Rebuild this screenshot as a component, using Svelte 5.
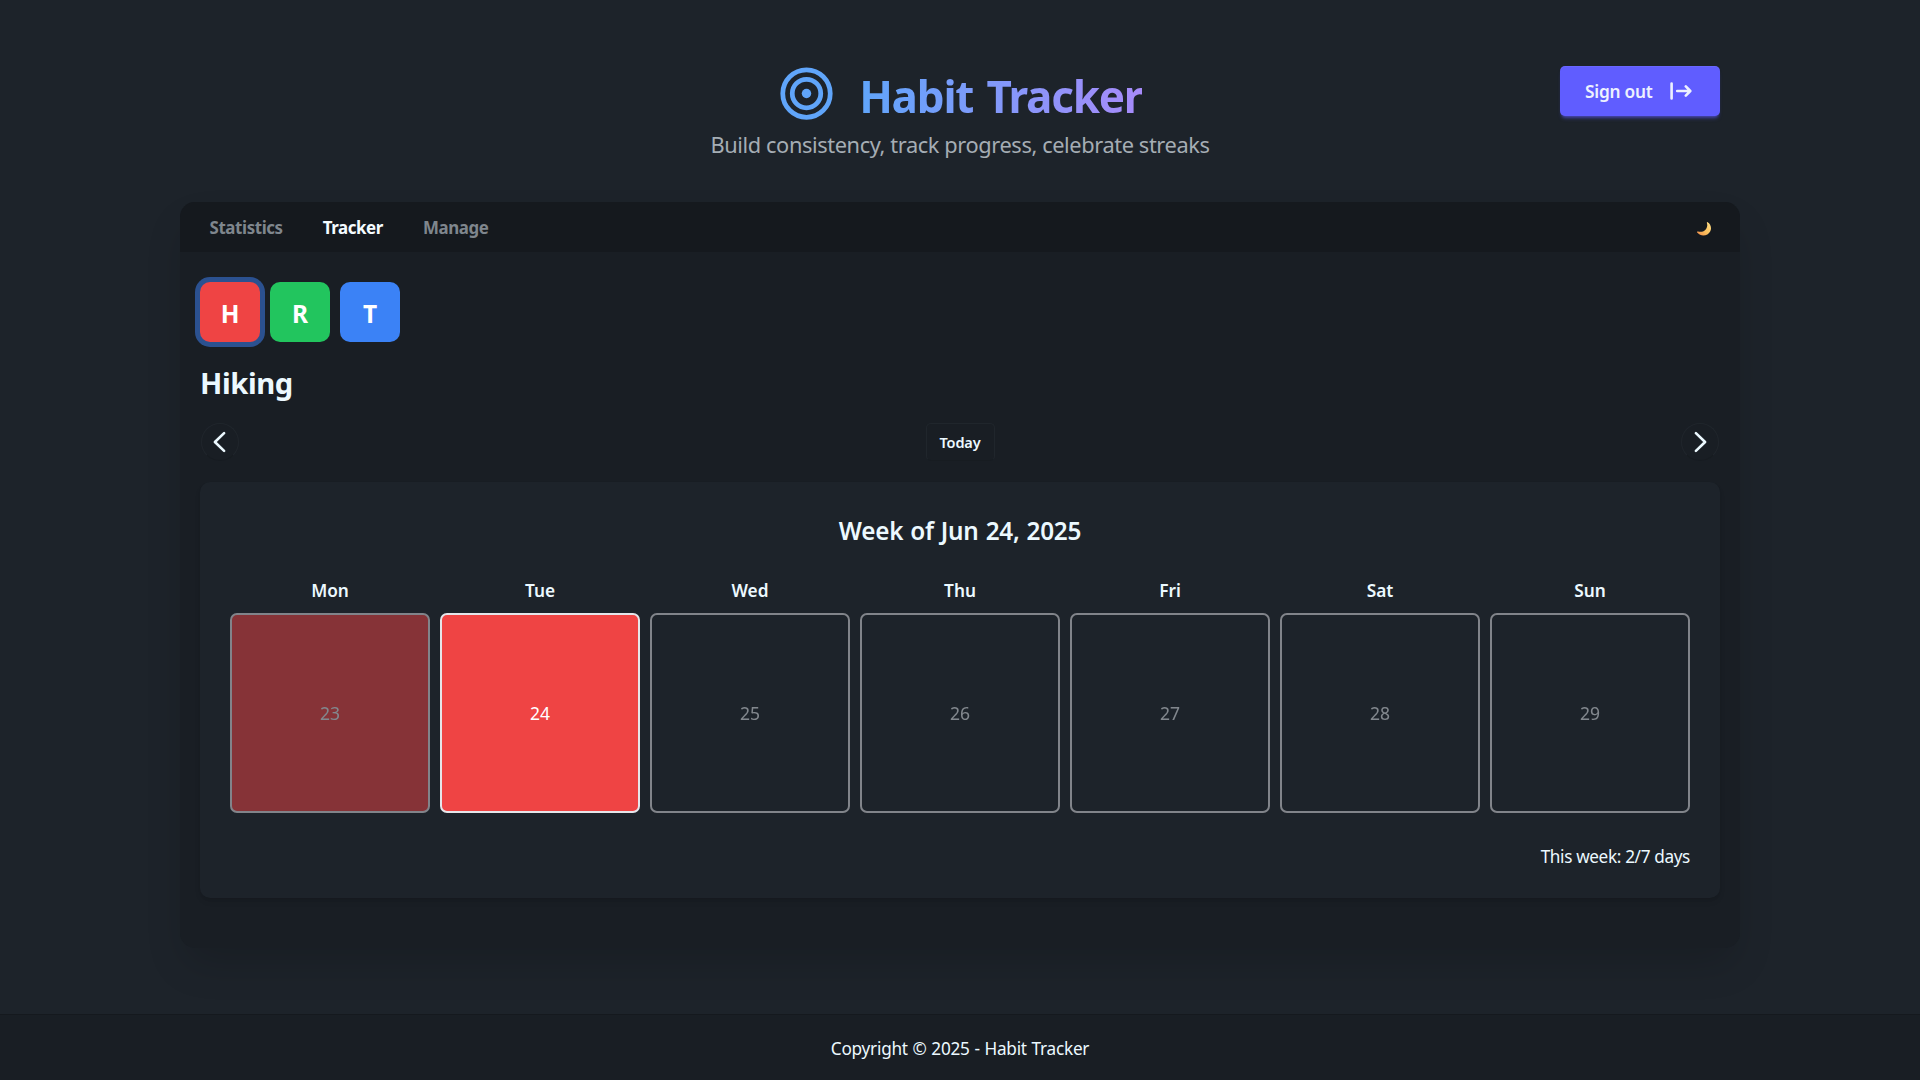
<script>
  const tabs = ['Statistics', 'Tracker', 'Manage'];
  let activeTab = $state('Tracker');

  const habits = [
    { name: 'Hiking', tone: 'red' },
    { name: 'Reading', tone: 'green' },
    { name: 'Training', tone: 'blue' },
  ];
  let selected = $state(0);

  const week = [
    { label: 'Mon', date: 23, done: true, today: false },
    { label: 'Tue', date: 24, done: true, today: true },
    { label: 'Wed', date: 25, done: false, today: false },
    { label: 'Thu', date: 26, done: false, today: false },
    { label: 'Fri', date: 27, done: false, today: false },
    { label: 'Sat', date: 28, done: false, today: false },
    { label: 'Sun', date: 29, done: false, today: false },
  ];
  const completed = week.filter((d) => d.done).length;
</script>

<div class="page">
  <header class="header">
    <div class="brand">
      <div class="title-row">
        <svg class="logo" viewBox="0 0 24 24" fill="none" stroke="#60a5fa" stroke-width="2">
          <circle cx="12" cy="12" r="10" />
          <circle cx="12" cy="12" r="6" />
          <circle cx="12" cy="12" r="2" fill="#60a5fa" stroke="none" />
        </svg>
        <h1>Habit Tracker</h1>
      </div>
      <p class="tagline">Build consistency, track progress, celebrate streaks</p>
    </div>
    <button class="sign-out">
      <span>Sign out</span>
      <svg width="24" height="24" viewBox="0 0 24 24" fill="none" stroke="currentColor" stroke-width="2.6" stroke-linecap="round" stroke-linejoin="round">
        <path d="M3.6 4.6V19.4M9.2 12H22M17.8 7.4 22.3 12l-4.5 4.6" />
      </svg>
    </button>
  </header>

  <main class="panel">
    <nav class="tabs">
      {#each tabs as tab}
        <button class="tab" class:active={tab === activeTab} onclick={() => (activeTab = tab)}>{tab}</button>
      {/each}
      <button class="theme" aria-label="Toggle theme">
        <svg width="16" height="16" viewBox="0 0 16 16">
          <defs>
            <linearGradient id="moon" x1="0" y1="1" x2="1" y2="0">
              <stop offset="0" stop-color="#f08a4b" />
              <stop offset="0.45" stop-color="#fbbf5c" />
              <stop offset="1" stop-color="#ffe28a" />
            </linearGradient>
          </defs>
          <path fill="url(#moon)" d="M11.6 1.2C14.7 3 15.900 6.900 14.300 10.200C12 14.900 5.200 16.300 1.200 11.600C.6 10.800 1.100 10.200 2 10.500C5 11.300 8.300 10.600 10.100 8C11.500 5.900 11.500 3.900 10.900 2C10.700 1.300 11.100 .9 11.600 1.200Z" />
        </svg>
      </button>
    </nav>

    <section class="content">
      <div class="habits">
        {#each habits as habit, i}
          <button class="habit {habit.tone}" class:selected={i === selected} onclick={() => (selected = i)}>{habit.name[0]}</button>
        {/each}
      </div>

      <h2>{habits[selected].name}</h2>

      <div class="pager">
        <button class="round" aria-label="Previous week">
          <svg width="24" height="24" viewBox="0 0 24 24" fill="none" stroke="currentColor" stroke-width="2.6" stroke-linecap="round" stroke-linejoin="round"><path d="M16.100 3.100 6.900 12l9.200 8.900" /></svg>
        </button>
        <button class="today">Today</button>
        <button class="round" aria-label="Next week">
          <svg width="24" height="24" viewBox="0 0 24 24" fill="none" stroke="currentColor" stroke-width="2.6" stroke-linecap="round" stroke-linejoin="round"><path d="M7.900 3.100 17.100 12l-9.200 8.900" /></svg>
        </button>
      </div>

      <div class="week-card">
        <h3>Week of Jun 24, 2025</h3>
        <div class="week">
          {#each week as day}
            <div class="day">
              <span class="day-name">{day.label}</span>
              <button class="cell" class:done={day.done} class:dim={!day.today}>{day.date}</button>
            </div>
          {/each}
        </div>
        <p class="summary">This week: {completed}/7 days</p>
      </div>
    </section>
  </main>

  <footer class="footer">Copyright © 2025 - Habit Tracker</footer>
</div>

<style>
  :global(body) {
    background: #1d232a;
  }

  .page {
    display: flex;
    flex-direction: column;
    box-sizing: border-box;
    height: 1080px;
    overflow: hidden;
    color: #ecf9ff;
    font-family: 'Noto Sans', 'Open Sans', sans-serif;
    font-size: 17.2px;
  }

  button {
    margin: 0;
    padding: 0;
    border: 0;
    background: none;
    color: inherit;
    font: inherit;
    cursor: pointer;
  }

  h1,
  h2,
  h3,
  p {
    margin: 0;
  }

  svg {
    display: block;
    flex: none;
  }

  .header {
    display: grid;
    grid-template-columns: 160px 1fr 160px;
    align-items: start;
    box-sizing: border-box;
    width: 1520px;
    height: 202px;
    margin: 0 auto;
    padding-top: 61px;
    flex: none;
  }

  .brand {
    grid-column: 2;
    display: flex;
    flex-direction: column;
    align-items: center;
  }

  .title-row {
    display: flex;
    align-items: center;
    gap: 24.5px;
    height: 70px;
  }

  .logo {
    width: 57px;
    height: 57px;
    margin-bottom: 5px;
  }

  h1 {
    background: linear-gradient(90deg, #60a5fa, #a78bfa);
    -webkit-background-clip: text;
    background-clip: text;
    color: transparent;
    font-size: 44px;
    font-weight: 700;
    line-height: 70px;
    letter-spacing: -1.2px;
    word-spacing: 3px;
    white-space: nowrap;
  }

  .tagline {
    color: #a5adb4;
    font-size: 21.8px;
    line-height: 27px;
    letter-spacing: -0.4px;
    white-space: nowrap;
  }

  .sign-out {
    display: flex;
    align-items: center;
    gap: 16px;
    box-sizing: border-box;
    width: 160px;
    height: 50px;
    margin-top: 5px;
    padding-left: 25px;
    border-radius: 5px;
    background: #605dff;
    box-shadow:
      inset 0 1px 0 rgba(255, 255, 255, 0.06),
      0 3px 3px -2px rgba(96, 93, 255, 0.5),
      0 4px 4px -2px rgba(96, 93, 255, 0.4);
    color: #edf1fe;
    font-size: 17.3px;
    font-weight: 600;
    letter-spacing: -0.25px;
    white-space: nowrap;
  }

  .sign-out svg {
    margin-bottom: 1px;
  }

  .panel {
    box-sizing: border-box;
    width: 1560px;
    height: 746px;
    margin: 0 auto;
    flex: none;
    border-radius: 15px;
    background: #191e24;
    box-shadow: 0 20px 40px -6px rgba(0, 0, 0, 0.16);
  }

  .tabs {
    display: flex;
    align-items: center;
    height: 50px;
    padding: 0 28px 0 9.500px;
    border-radius: 15px 15px 0 0;
    background: #15191e;
  }

  .tab {
    height: 50px;
    padding: 0 20px;
    color: #7f868d;
    font-size: 16.900px;
    font-weight: 700;
    letter-spacing: -0.4px;
  }

  .tab.active {
    color: #f5fcff;
  }

  .theme {
    margin-left: auto;
    padding-top: 3px;
  }

  .content {
    padding: 30px 20px;
  }

  .habits {
    display: flex;
    gap: 10px;
  }

  .habit {
    width: 60px;
    height: 60px;
    padding-top: 3px;
    border-radius: 10px;
    color: #fff;
    font-size: 24.5px;
    font-weight: 700;
  }

  .red {
    background: #ef4444;
  }

  .green {
    background: #22c55e;
  }

  .blue {
    background: #3b82f6;
  }

  .habit.selected {
    box-shadow: 0 0 0 5px #2b5190;
  }

  h2 {
    height: 40px;
    margin: 21px 0 19px;
    font-size: 29.2px;
    font-weight: 700;
    line-height: 41px;
    letter-spacing: -0.4px;
  }

  .pager {
    display: flex;
    justify-content: space-between;
    align-items: center;
    height: 40px;
    padding: 0 1px;
  }

  .round,
  .today {
    display: grid;
    place-items: center;
    box-sizing: border-box;
    height: 38px;
    border: 1px solid #20262c;
    border-bottom-color: #171c21;
  }

  .round {
    width: 38px;
    border-radius: 50%;
  }

  .today {
    width: 69px;
    border-radius: 5px;
    font-size: 14.5px;
    font-weight: 600;
    letter-spacing: -0.1px;
  }

  .week-card {
    box-sizing: border-box;
    height: 416px;
    margin-top: 20px;
    padding: 30px;
    border-radius: 10px;
    background: #1d232a;
    box-shadow:
      0 4px 6px -1px rgba(0, 0, 0, 0.1),
      0 2px 4px -2px rgba(0, 0, 0, 0.1);
  }

  h3 {
    margin-bottom: 29px;
    font-size: 24.3px;
    font-weight: 600;
    line-height: 37px;
    letter-spacing: -0.25px;
    word-spacing: 1px;
    text-align: center;
  }

  .week {
    display: grid;
    grid-template-columns: repeat(7, 1fr);
    gap: 10px;
  }

  .day {
    display: flex;
    flex-direction: column;
    gap: 10px;
  }

  .day-name {
    font-size: 17.3px;
    font-weight: 600;
    line-height: 25px;
    text-align: center;
  }

  .cell {
    box-sizing: border-box;
    height: 200px;
    border: 2px solid #e5e5ea;
    border-radius: 7px;
    color: #fff;
    font-size: 17.5px;
  }

  .cell.done {
    background: #ef4444;
  }

  .cell.dim {
    opacity: 0.5;
    color: #e6ebf0;
  }

  .summary {
    margin-top: 31px;
    line-height: 25px;
    letter-spacing: -0.36px;
    text-align: right;
  }

  .footer {
    display: grid;
    place-items: center;
    box-sizing: border-box;
    height: 66px;
    margin-top: auto;
    padding-top: 1px;
    border-top: 1px solid #15191e;
    background: #191e24;
    letter-spacing: -0.24px;
    word-spacing: 0.5px;
  }
</style>
